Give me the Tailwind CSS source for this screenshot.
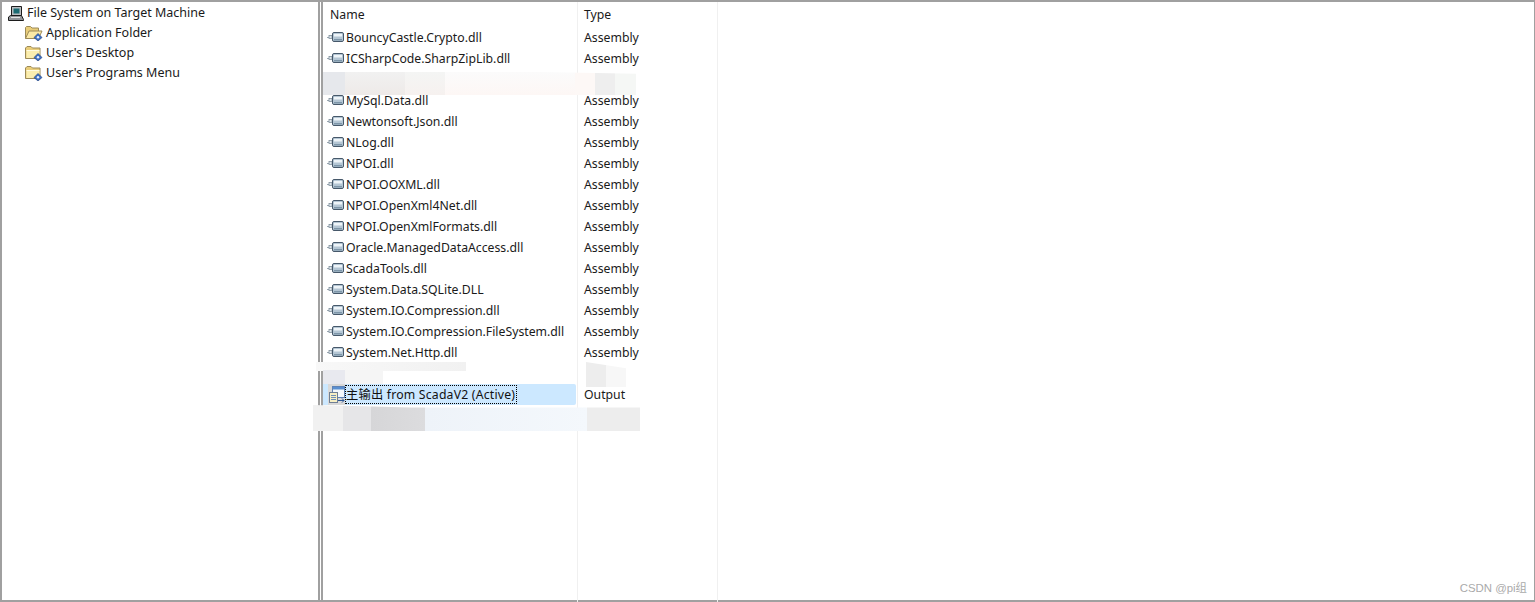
<!DOCTYPE html>
<html lang="en">
<head>
  <meta charset="utf-8" />
  <title>File System</title>
  <script src="https://cdn.jsdelivr.net/npm/@tailwindcss/browser@4"></script>
</head>
<body class="bg-white">
  <svg class="hidden">
    <symbol id="asm" viewBox="0 0 18 12">
      <path d="M0 5.500h3" stroke="#9aa7b2" fill="none"/>
      <rect x="2" y="3.500" width="3" height="3" fill="#dfe6ec" stroke="#7f8f9c" stroke-width=".8"/>
      <rect x="5.500" y=".5" width="11" height="9" rx="1.500" fill="#b4c6d4" stroke="#46586a"/>
      <rect x="7" y="2" width="8" height="2.500" fill="#eef4f8"/>
      <rect x="7" y="7" width="8" height="1.500" fill="#7d95a8"/>
    </symbol>
    <symbol id="folder" viewBox="0 0 18 16">
      <path d="M.5 13.500V3l1.500-1.500h4L7.500 3h7.500v10.500z" fill="#e9cd7a" stroke="#9c8a58"/>
      <path d="M1.500 13V5.500h13V13z" fill="#fbeeb0"/>
      <path d="M1.500 5.500h13" stroke="#fffbe0"/>
      <path d="M13 8.500l4 4-4 3.500-4-3.500z" fill="#3d6fc4" stroke="#27467f" stroke-width=".7"/>
      <circle cx="13" cy="12.300" r="1.200" fill="#e3ecfa"/>
    </symbol>
    <symbol id="folder-open" viewBox="0 0 18 16">
      <path d="M.5 13.500V2.500l1-1h4l1.500 1.500h6.500v3" fill="#e9cd7a" stroke="#9c8a58"/>
      <path d="M.5 13.500L4 6h13l-3.500 7.500z" fill="#fbe9a6" stroke="#9c8a58"/>
      <path d="M13 8.500l4 4-4 3.500-4-3.500z" fill="#3d6fc4" stroke="#27467f" stroke-width=".7"/>
      <circle cx="13" cy="12.300" r="1.200" fill="#e3ecfa"/>
    </symbol>
  </svg>

  <div class="relative h-[602px] w-[1535px] overflow-hidden font-['Noto_Sans','Noto_Sans_CJK_SC',sans-serif] text-[12.5px] leading-[20px] text-[#1a1a1a]">
    <div class="flex h-full border-y-2 border-l-2 border-r border-[#a0a0a0]">
      <!-- tree pane -->
      <div class="w-[316px] shrink-0 pt-px">
        <div class="flex h-[20px] items-center pl-[5px]">
          <svg class="mr-[3px] h-[17px] w-[17px] shrink-0" viewBox="0 0 17 17">
            <path d="M4.500 1.500h10v9h-10z" fill="#b9bcc0" stroke="#1c1c1c"/>
            <rect x="6.500" y="3.500" width="6" height="5" fill="#1b6a72"/>
            <path d="M1.500 12l2-1.500h11l2 4v1h-15z" fill="#92959a" stroke="#1c1c1c"/>
            <path d="M4 12.500h9" stroke="#e2e2e2"/>
          </svg>
          <span>File System on Target Machine</span>
        </div>
        <div class="flex h-[20px] items-center pl-[23px]"><svg class="mr-[3px] h-4 w-[18px] shrink-0"><use href="#folder-open"/></svg><span>Application Folder</span></div>
        <div class="flex h-[20px] items-center pl-[23px]"><svg class="mr-[3px] h-4 w-[18px] shrink-0"><use href="#folder"/></svg><span>User's Desktop</span></div>
        <div class="flex h-[20px] items-center pl-[23px]"><svg class="mr-[3px] h-4 w-[18px] shrink-0"><use href="#folder"/></svg><span>User's Programs Menu</span></div>
      </div>
      <!-- splitter -->
      <div class="h-full w-[5px] shrink-0 border-x-2 border-[#a0a0a0] bg-white"></div>
      <!-- list pane -->
      <div class="flex-1 text-[12.25px]">
        <div class="flex h-[25px] items-center">
          <div class="h-full w-[254px] pl-[7px] leading-[26px]">Name</div>
          <div class="h-full w-[140px] pl-[7px] leading-[26px]">Type</div>
        </div>
        <div class="relative">
          <div class="absolute left-[254px] top-[-25px] h-[600px] w-px bg-[#f0f0f0]"></div>
          <div class="absolute left-[394px] top-[-25px] h-[600px] w-px bg-[#f0f0f0]"></div>

          <div class="flex h-[21px] items-center"><div class="flex w-[254px] items-center pl-[4px]"><svg class="mr-px h-3 w-[18px] shrink-0"><use href="#asm"/></svg><span>BouncyCastle.Crypto.dll</span></div><span class="pl-[7px]">Assembly</span></div>
          <div class="flex h-[21px] items-center"><div class="flex w-[254px] items-center pl-[4px]"><svg class="mr-px h-3 w-[18px] shrink-0"><use href="#asm"/></svg><span>ICSharpCode.SharpZipLib.dll</span></div><span class="pl-[7px]">Assembly</span></div>
          <div class="h-[21px]"></div>
          <div class="flex h-[21px] items-center"><div class="flex w-[254px] items-center pl-[4px]"><svg class="mr-px h-3 w-[18px] shrink-0"><use href="#asm"/></svg><span>MySql.Data.dll</span></div><span class="pl-[7px]">Assembly</span></div>
          <div class="flex h-[21px] items-center"><div class="flex w-[254px] items-center pl-[4px]"><svg class="mr-px h-3 w-[18px] shrink-0"><use href="#asm"/></svg><span>Newtonsoft.Json.dll</span></div><span class="pl-[7px]">Assembly</span></div>
          <div class="flex h-[21px] items-center"><div class="flex w-[254px] items-center pl-[4px]"><svg class="mr-px h-3 w-[18px] shrink-0"><use href="#asm"/></svg><span>NLog.dll</span></div><span class="pl-[7px]">Assembly</span></div>
          <div class="flex h-[21px] items-center"><div class="flex w-[254px] items-center pl-[4px]"><svg class="mr-px h-3 w-[18px] shrink-0"><use href="#asm"/></svg><span>NPOI.dll</span></div><span class="pl-[7px]">Assembly</span></div>
          <div class="flex h-[21px] items-center"><div class="flex w-[254px] items-center pl-[4px]"><svg class="mr-px h-3 w-[18px] shrink-0"><use href="#asm"/></svg><span>NPOI.OOXML.dll</span></div><span class="pl-[7px]">Assembly</span></div>
          <div class="flex h-[21px] items-center"><div class="flex w-[254px] items-center pl-[4px]"><svg class="mr-px h-3 w-[18px] shrink-0"><use href="#asm"/></svg><span>NPOI.OpenXml4Net.dll</span></div><span class="pl-[7px]">Assembly</span></div>
          <div class="flex h-[21px] items-center"><div class="flex w-[254px] items-center pl-[4px]"><svg class="mr-px h-3 w-[18px] shrink-0"><use href="#asm"/></svg><span>NPOI.OpenXmlFormats.dll</span></div><span class="pl-[7px]">Assembly</span></div>
          <div class="flex h-[21px] items-center"><div class="flex w-[254px] items-center pl-[4px]"><svg class="mr-px h-3 w-[18px] shrink-0"><use href="#asm"/></svg><span>Oracle.ManagedDataAccess.dll</span></div><span class="pl-[7px]">Assembly</span></div>
          <div class="flex h-[21px] items-center"><div class="flex w-[254px] items-center pl-[4px]"><svg class="mr-px h-3 w-[18px] shrink-0"><use href="#asm"/></svg><span>ScadaTools.dll</span></div><span class="pl-[7px]">Assembly</span></div>
          <div class="flex h-[21px] items-center"><div class="flex w-[254px] items-center pl-[4px]"><svg class="mr-px h-3 w-[18px] shrink-0"><use href="#asm"/></svg><span>System.Data.SQLite.DLL</span></div><span class="pl-[7px]">Assembly</span></div>
          <div class="flex h-[21px] items-center"><div class="flex w-[254px] items-center pl-[4px]"><svg class="mr-px h-3 w-[18px] shrink-0"><use href="#asm"/></svg><span>System.IO.Compression.dll</span></div><span class="pl-[7px]">Assembly</span></div>
          <div class="flex h-[21px] items-center"><div class="flex w-[254px] items-center pl-[4px]"><svg class="mr-px h-3 w-[18px] shrink-0"><use href="#asm"/></svg><span>System.IO.Compression.FileSystem.dll</span></div><span class="pl-[7px]">Assembly</span></div>
          <div class="flex h-[21px] items-center"><div class="flex w-[254px] items-center pl-[4px]"><svg class="mr-px h-3 w-[18px] shrink-0"><use href="#asm"/></svg><span>System.Net.Http.dll</span></div><span class="pl-[7px]">Assembly</span></div>
          <div class="h-[21px]"></div>
          <!-- selected row -->
          <div class="flex h-[21px] items-center">
            <div class="flex h-full w-[253px] items-center rounded-r-[2px] bg-[#cce8ff] pl-[5px]">
              <svg class="h-[21px] w-[17px] shrink-0" viewBox="0 0 17 21">
                <rect width="17" height="21" fill="#d9d9d9"/>
                <rect x="4.500" y="2.500" width="12" height="11" fill="#f4f8fc" stroke="#5f83b5"/>
                <rect x="5" y="3" width="11" height="2.500" fill="#5a8fd0"/>
                <rect x="1.500" y="8.500" width="8" height="10" fill="#f7efc4" stroke="#6f7f95"/>
                <path d="M3 11.500h5M3 13.500h5M3 15.500h5" stroke="#6f8fb8"/>
                <path d="M10 16.500h6M14 14.500l2 2-2 2" fill="none" stroke="#2b5797"/>
              </svg>
              <span class="h-[19px] border border-dotted border-black pr-px leading-[17px] tracking-[0.2px] text-[#111]">主输出 from ScadaV2 (Active)</span>
            </div>
            <span class="pl-[8px]">Output</span>
          </div>
        </div>
      </div>
    </div>

    <!-- smudged-out rows -->
    <div class="absolute left-[323px] top-[72px] flex h-[23px] w-[313px] [clip-path:polygon(0_0,70%_0,100%_8%,100%_100%,0_100%)]">
      <div class="w-[22px] bg-[#e6e8ec]"></div>
      <div class="w-[60px] bg-gradient-to-b from-[#f1f1f1] to-[#eeeae8]"></div>
      <div class="w-[40px] bg-gradient-to-b from-[#f4f5f4] to-[#f6f1ef]"></div>
      <div class="w-[130px] bg-gradient-to-b from-[#fbfbfb] to-[#fdf7f5]"></div>
      <div class="w-[20px] bg-[#fdf8f6]"></div>
      <div class="w-[20px] bg-[#eeeeee]"></div>
      <div class="w-[21px] bg-[#f5f7f5]"></div>
    </div>
    <div class="absolute left-[316px] top-[362px] h-[9px] w-[150px] bg-gradient-to-r from-[#f8f8f8] to-[#f1f1f1]"></div>
    <div class="absolute left-[323px] top-[370px] flex h-[14px] w-[60px]">
      <div class="w-[22px] bg-[#e8e9ef]"></div>
      <div class="w-[38px] bg-[#f5f5f5]"></div>
    </div>
    <div class="absolute left-[586px] top-[362px] flex h-[25px] w-[40px] [clip-path:polygon(0_0,100%_25%,100%_100%,0_100%)]">
      <div class="w-[20px] bg-[#ededed]"></div>
      <div class="w-[20px] bg-[#f7f7f7]"></div>
    </div>
    <div class="absolute left-[313px] top-[405px] flex h-[26px] w-[327px] [clip-path:polygon(0_0,30%_10%,100%_10%,100%_100%,0_100%)]">
      <div class="w-[30px] bg-[#f1f1f1]"></div>
      <div class="w-[28px] bg-[#e6e6e8]"></div>
      <div class="w-[54px] bg-gradient-to-r from-[#d6d6d8] to-[#dcdcde]"></div>
      <div class="w-[162px] bg-gradient-to-r from-[#eef3f9] to-[#f4f8fc]"></div>
      <div class="w-[53px] bg-[#ededed]"></div>
    </div>

    <div class="absolute bottom-[7px] right-[8px] font-['Liberation_Sans','Noto_Sans_CJK_SC',sans-serif] text-[11.4px] leading-[14px] text-[#aaaaaa]">CSDN @pi&#x7EC4;</div>
  </div>
</body>
</html>
